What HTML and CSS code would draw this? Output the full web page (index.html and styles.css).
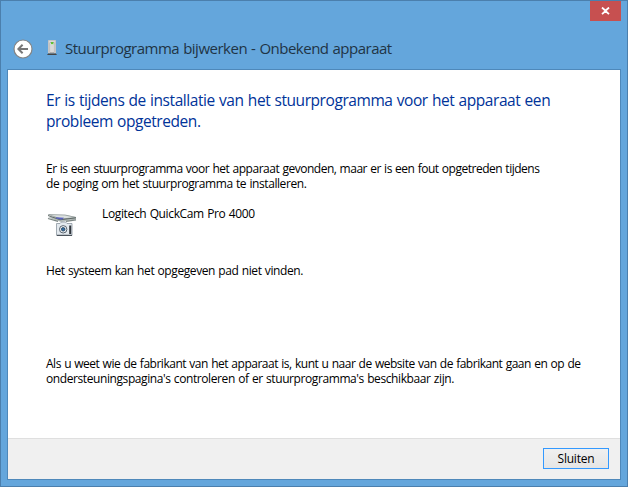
FILE: index.html
```html
<!DOCTYPE html>
<html lang="nl">
<head>
<meta charset="utf-8">
<title>Stuurprogramma bijwerken</title>
<link rel="stylesheet" href="styles.css">
</head>
<body>
<div class="window">
  <div class="caption">
    <button class="close" aria-label="Sluiten">
      <svg width="9" height="8" viewBox="0 0 9 8"><path d="M1 0.5 4.5 3.7 8 0.5M1 7.2 4.5 4 8 7.2" fill="none" stroke="#fff" stroke-width="1.8"/></svg>
    </button>
  </div>
  <header class="header">
    <svg class="back" width="20" height="20" viewBox="0 0 20 20"><circle cx="10" cy="10" r="9" fill="#fff" stroke="#858585" stroke-width="1.2"/><path d="M5.6 10H15M9.6 5.8 5.4 10l4.2 4.2" fill="none" stroke="#777" stroke-width="2"/></svg>
    <svg class="device" width="10" height="16" viewBox="0 0 10 16"><path d="M1.5 .5h7V13h-7z" fill="#d9d9d9" stroke="#c5c5c5"/><path d="M3 2.5h4v10H3z" fill="#f7f7f7" stroke="#999" stroke-width=".7"/><path d="M5 5v7" stroke="#bbb"/><path d="M4 2h2.3v2.3H4z" fill="#5fc235"/><path d="M1.2 13.4h7.6L10 15H0z" fill="#444"/></svg>
    <h1 class="title">Stuurprogramma bijwerken - Onbekend apparaat</h1>
  </header>
  <div class="panel">
    <main class="content">
      <h2 class="heading"><span class="line">Er is tijdens de installatie van het stuurprogramma voor het apparaat een</span><span class="line">probleem opgetreden.</span></h2>
      <p class="text intro"><span class="line wide">Er is een stuurprogramma voor het apparaat gevonden, maar er is een fout opgetreden tijdens</span><span class="line">de poging om het stuurprogramma te installeren.</span></p>
      <div class="item">
        <svg class="camera" width="32" height="26" viewBox="0 0 32 26">
          <path d="M2 5.5 15 10l15-2.5V5L20 3z" fill="#b3bbba"/>
          <path d="M2.5 2.5 19 3l11 2.5-15 1.6z" fill="#dce1df" stroke="#929b9a" stroke-width=".8"/>
          <path d="M2 3.5 14 7.8l16-2" fill="none" stroke="#5f6967" stroke-width="1"/>
          <path d="M2 6.5 12 9.4M20 9.4l10-1.6" fill="none" stroke="#7b8583" stroke-width="1.3"/>
          <path d="M10 5.3 18 5.7l-2 2-6-1.2z" fill="#5960bd"/>
          <path d="M10.5 11.5H14l1.5-1.5h4l1.5 1.5h5V23.4H10.5z" fill="#e3e9ee" stroke="#8b959f" stroke-width=".8"/>
          <path d="M23.2 13.5h2v8.5h-2z" fill="#30363d"/>
          <path d="M11 23.4h15" stroke="#4b535b" stroke-width="1.2"/>
          <circle cx="17.2" cy="17.3" r="3.7" fill="#f5f8fa" stroke="#56616c"/>
          <circle cx="17.2" cy="17.3" r="1.8" fill="#356c9f" stroke="#203c58" stroke-width=".8"/>
        </svg>
        <span class="text device-name">Logitech QuickCam Pro 4000</span>
      </div>
      <p class="text error">Het systeem kan het opgegeven pad niet vinden.</p>
      <p class="text advice"><span class="line">Als u weet wie de fabrikant van het apparaat is, kunt u naar de website van de fabrikant gaan en op de</span><span class="line">ondersteuningspagina's controleren of er stuurprogramma's beschikbaar zijn.</span></p>
    </main>
    <footer class="footer"><button class="button">Sluiten</button></footer>
  </div>
</div>
</body>
</html>
```
FILE: styles.css
```css
* { box-sizing: border-box; margin: 0; padding: 0; }
body { font-family: "Open Sans", "Noto Sans", sans-serif; overflow: hidden; }
.window { width: 628px; height: 487px; padding: 0 6px 6px; border: 1px solid #4b7fad; background: #64a6dc; display: flex; flex-direction: column; }
.caption { height: 20px; display: flex; justify-content: flex-end; }
.close { width: 31px; height: 20px; border: 0; background: #c75050; display: flex; align-items: center; justify-content: center; }
.header { height: 48px; padding: 7px 0 1px 6px; display: flex; align-items: center; }
.back { margin: 1px 14px 0 0; }
.title { margin: 0 0 1px 8px; font-size: 15px; font-weight: 400; line-height: 20px; letter-spacing: -0.5px; word-spacing: 0.6px; color: #1f3445; white-space: nowrap; }
.panel { height: 411px; border: 1px solid #4e88ba; background: #fff; display: flex; flex-direction: column; }
.content { height: 368px; padding: 20px 20px 0 38px; }
.line { display: block; white-space: nowrap; }
.heading { font-size: 15.5px; font-weight: 400; line-height: 21px; letter-spacing: -0.43px; word-spacing: 0.6px; color: #003399; }
.text { font-size: 12px; line-height: 15px; letter-spacing: -0.48px; word-spacing: 0.6px; color: #000; white-space: nowrap; }
.intro { margin-top: 29px; letter-spacing: -0.42px; }
.wide { letter-spacing: -0.49px; }
.item { height: 30px; margin-top: 15px; display: flex; align-items: flex-start; gap: 24px; }
.camera { margin-top: 6px; }
.device-name { letter-spacing: -0.36px; }
.error { margin-top: 27px; letter-spacing: -0.41px; }
.advice { margin-top: 78px; }
.advice .line { letter-spacing: -0.48px; }
.advice .line:last-child { letter-spacing: -0.41px; }
.footer { height: 41px; border-top: 1px solid #dfdfdf; background: #f0f0f0; padding: 9px 11px 0 0; display: flex; justify-content: flex-end; }
.button { width: 66px; height: 21px; border: 1px solid #3399ff; background: linear-gradient(#f0f0f0, #e5e5e5); font: 12px/19px "Open Sans", sans-serif; letter-spacing: -0.2px; color: #000; }
```
